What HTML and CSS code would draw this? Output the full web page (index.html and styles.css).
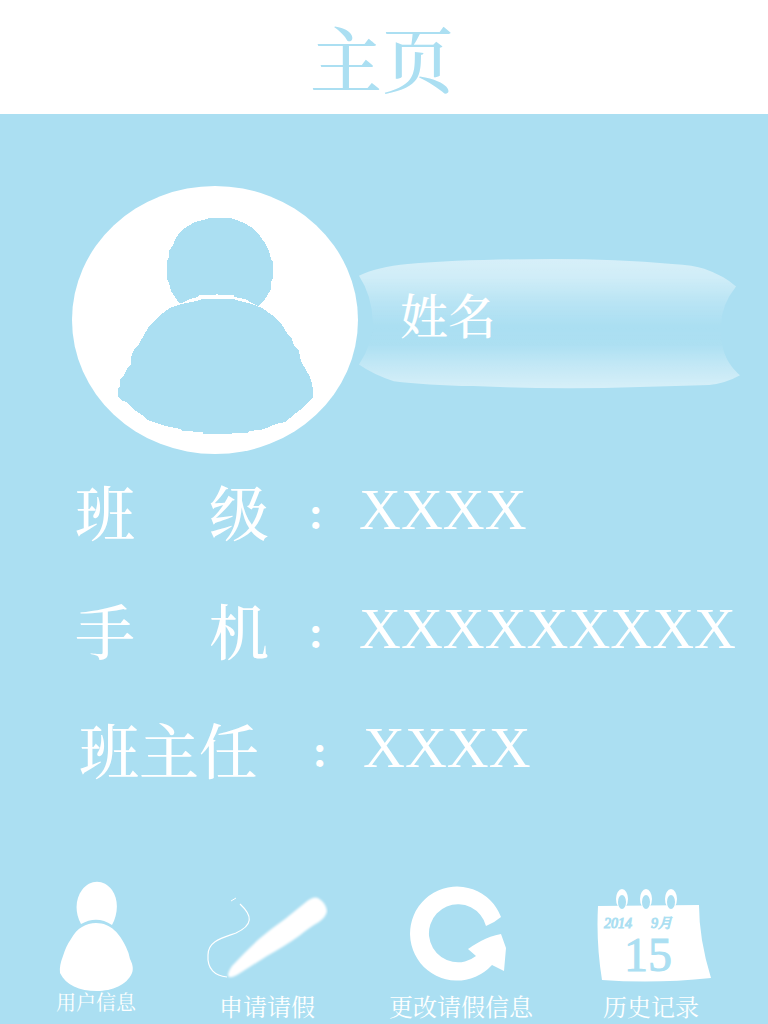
FILE: index.html
```html
<!DOCTYPE html>
<html lang="zh-CN">
<head>
<meta charset="utf-8">
<meta name="viewport" content="width=device-width, initial-scale=1">
<title>主页</title>
<link rel="stylesheet" href="styles.css">
</head>
<body>
<header class="header"><h1 class="title">主页</h1></header>
<main class="main">
  <section class="profile">
    <svg class="avatar" viewBox="72 186 286 268" aria-hidden="true">
      <ellipse cx="215" cy="320" rx="143" ry="134" fill="#fff"/>
      <g fill="#abdff2" shape-rendering="crispEdges">
        <path d="M179 303L175 297L171 291L169 283L167 279V261L169 257V251L173 245L176 238L181 231L188 226L195 222L203 220L209 218H230L237 220L246 224L254 229L260 236L265 243L269 251L271 259L273 262V278L271 282V289L267 296L264 301L258 306L252 303L245 299L234 297V295H218L217 294L215 295H199L198 297L190 299L182 303Z"/>
        <path d="M118 397V388L120 386V380L124 375L127 369L131 364V357L134 350L139 344L144 335L150 325L160 315L170 308L178 305L186 303L196 301L203 299H233L240 301L252 304L262 308L272 315L282 325L287 333L292 339L294 345L299 351L301 361L306 370L310 377L312 384L313 389V398L308 402L304 407L296 413L290 418L285 422L276 424L269 427L260 430L249 431L248 433H232V434H203V432L182 431L180 429L170 427L159 424L148 420L142 415L136 411L130 406L126 402L121 400Z"/>
      </g>
    </svg>
    <div class="banner">
      <svg class="banner-shape" viewBox="0 0 386 134" preserveAspectRatio="none" aria-hidden="true">
        <defs>
          <linearGradient id="sheen" x1="0" y1="0" x2="0" y2="1">
            <stop offset="0" stop-color="#fff" stop-opacity=".52"/>
            <stop offset=".14" stop-color="#fff" stop-opacity=".44"/>
            <stop offset=".35" stop-color="#fff" stop-opacity=".15"/>
            <stop offset=".52" stop-color="#fff" stop-opacity="0"/>
            <stop offset=".66" stop-color="#fff" stop-opacity=".02"/>
            <stop offset=".82" stop-color="#fff" stop-opacity=".28"/>
            <stop offset="1" stop-color="#fff" stop-opacity=".52"/>
          </linearGradient>
          <filter id="soft"><feGaussianBlur stdDeviation=".8"/></filter>
        </defs>
        <path d="M1 18C12 12 30 8 50 6Q110 1 196 1Q260 1 316 6Q338 7 348 11Q368 18 380 29Q365 48 365 68C364 94 371 107 384 119Q370 127 353 129Q320 130 283 131Q200 134 116 130Q68 129 36 125Q15 118 1 108Q15 87 15 65Q14 38 1 18Z" fill="url(#sheen)" filter="url(#soft)"/>
      </svg>
      <p class="name">姓名</p>
    </div>
  </section>
  <dl class="details">
    <div class="row"><dt class="label"><span>班</span><span>级</span></dt><dd class="value"><span class="colon">：</span>XXXX</dd></div>
    <div class="row"><dt class="label"><span>手</span><span>机</span></dt><dd class="value"><span class="colon">：</span>XXXXXXXXX</dd></div>
    <div class="row row-teacher"><dt class="label">班主任</dt><dd class="value"><span class="colon">：</span>XXXX</dd></div>
  </dl>
</main>
<nav class="nav">
  <a class="tab" href="#user">
    <svg class="icon icon-user" viewBox="58 881 76 112" fill="#fff" aria-hidden="true">
      <path d="M81 924C74 911 76 898 82 890C90 879 104 879 112 890C119 900 118 914 112 925Q97 915 81 924Z"/>
      <path d="M96 923C111 923 120 934 126 947Q129 953 130 959C132 963 134 968 132 973C127 985 112 991 97 991C79 991 66 985 60 973Q59 966 63 956Q66 946 71 939C77 928 86 923 96 923Z"/>
    </svg>
    <span class="tab-label tab-label-small">用户信息</span>
  </a>
  <a class="tab" href="#apply">
    <svg class="icon icon-pen" viewBox="206 881 122 112" aria-hidden="true">
      <path d="M229 977Q226 975 232 966Q244 953 259 939Q272 928 285 919L306 902Q313 896 318 898Q326 903 327 911Q326 917 319 922Q310 927 299 936Q285 946 267 956L237 975Q231 978 229 977Z" fill="#fff" filter="url(#soft)"/>
      <path d="M231 901L236 898" fill="none" stroke="#fff" stroke-width="1"/>
      <path d="M240 904C253 916 253 925 236 933C222 938 208 941 208 955C207 969 215 976 227 977" fill="none" stroke="#fff" stroke-width="1.2"/>
    </svg>
    <span class="tab-label">申请请假</span>
  </a>
  <a class="tab" href="#change">
    <svg class="icon icon-redo" viewBox="410 881 104 112" aria-hidden="true">
      <path d="M502 917A47 47 0 1 0 493 965L505 971L507 948L502 934Q491 936 482 941Q473 946 469 949L477 956A29 29 0 1 1 487 926Q495 923 502 917Z" fill="#fff"/>
    </svg>
    <span class="tab-label">更改请假信息</span>
  </a>
  <a class="tab" href="#history">
    <svg class="icon icon-calendar" viewBox="597 881 114 112" aria-hidden="true">
      <path d="M598 906L699 905Q699 939 711 978Q655 984 602 980Q596 943 598 906Z" fill="#fff"/>
      <g fill="#fff"><ellipse cx="622" cy="899" rx="6" ry="10"/><ellipse cx="646" cy="899" rx="6" ry="10"/><ellipse cx="671" cy="899" rx="6" ry="10"/></g>
      <g fill="#abdff2"><ellipse cx="622" cy="902" rx="4" ry="7"/><ellipse cx="646" cy="902" rx="4" ry="7"/><ellipse cx="671" cy="902" rx="4" ry="7"/></g>
      <text class="cal-small" x="604" y="928">2014</text>
      <text class="cal-small" x="651" y="928">9月</text>
      <text class="cal-day" x="624" y="971">15</text>
    </svg>
    <span class="tab-label tab-label-history">历史记录</span>
  </a>
</nav>
</body>
</html>
```
FILE: styles.css
```css
* { box-sizing: border-box; }
body {
  margin: 0;
  min-height: 100vh;
  display: flex;
  flex-direction: column;
  background: #abdff2;
  color: #fff;
  font-family: "Liberation Serif", "Noto Serif CJK SC", "Noto Sans CJK SC", serif;
  font-weight: 400;
}
.header {
  padding: 26px 4px 14px 0;
  background: #fff;
  text-align: center;
}
.title {
  margin: 0;
  color: #abdff2;
  font-size: 72px;
  line-height: 74px;
  font-weight: 500;
}
.main { flex: 1; }
.profile {
  display: flex;
  align-items: center;
  padding: 72px 26px 0 72px;
}
.avatar { flex: none; width: 286px; height: 268px; }
.banner {
  position: relative;
  flex: 1;
  margin-top: 8px;
  padding: 32px 0 44px 42px;
}
.banner-shape {
  position: absolute;
  inset: 0;
  width: 100%;
  height: 100%;
}
.name {
  position: relative;
  margin: 0;
  font-size: 48px;
  line-height: 56px;
  font-weight: 500;
}
.details {
  display: flex;
  flex-direction: column;
  gap: 53px;
  margin: 0;
  padding: 30px 0 30px 75px;
}
.row { display: flex; }
.row-teacher { padding-left: 4px; }
.label {
  display: flex;
  justify-content: space-between;
  width: 194px;
  font-size: 60px;
  line-height: 64px;
  font-weight: 500;
}
.value {
  display: flex;
  margin: 0;
  font-size: 58px;
  line-height: 52px;
}
.colon {
  width: 90px;
  padding-left: 36px;
  font-size: 40px;
  line-height: 66px;
  font-weight: 700;
}
.nav {
  display: grid;
  grid-template-columns: 164fr 178fr 210fr 176fr;
  padding: 0 26px 1px 14px;
}
.tab {
  display: flex;
  flex-direction: column;
  align-items: center;
  color: #fff;
  text-decoration: none;
}
.icon { height: 112px; }
.icon-user { width: 76px; }
.icon-pen { width: 122px; }
.icon-redo { width: 104px; }
.icon-calendar { width: 114px; }
.tab-label { font-size: 24px; line-height: 30px; white-space: nowrap; }
.tab-label-small { font-size: 20px; line-height: 20px; }
.tab-label-history { padding-right: 6px; }
.cal-small { fill: #abdff2; stroke: #abdff2; stroke-width: 1px; font-size: 14px; font-style: italic; font-weight: 400; }
.cal-day { fill: #abdff2; stroke: #abdff2; stroke-width: 1px; font-size: 48px; font-weight: 400; }
```
